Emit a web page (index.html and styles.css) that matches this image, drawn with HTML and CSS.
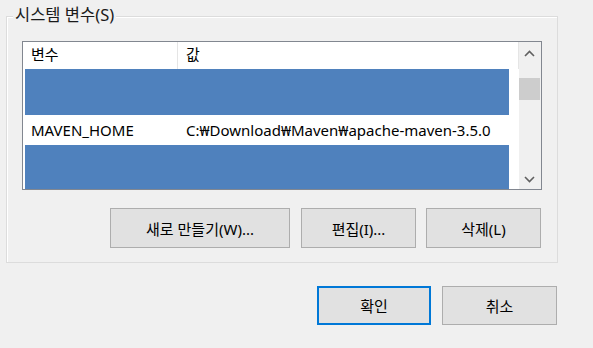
FILE: index.html
```html
<!DOCTYPE html>
<html lang="ko">
<head>
  <meta charset="UTF-8" />
  <title>시스템 변수</title>
  <link rel="stylesheet" href="styles.css">
</head>
<body>
  <div class="dialog">
    <div class="group">
      <span class="group-title">시스템 변수(S)</span>

      <div class="listview">
        <div class="list-main">
          <div class="list-header">
            <div class="col col-name">변수</div>
            <div class="col col-value">값</div>
          </div>
          <div class="row masked tall"></div>
          <div class="row">
            <div class="cell cell-name">MAVEN_HOME</div>
            <div class="cell cell-value">C:₩Download₩Maven₩apache-maven-3.5.0</div>
          </div>
          <div class="row masked fill"></div>
        </div>
        <div class="scrollbar">
          <div class="arrow">
            <svg width="11" height="7" viewBox="0 0 11 7"><path d="M1 6 L5.5 1.5 L10 6" fill="none" stroke="#606060" stroke-width="1.6"/></svg>
          </div>
          <div class="thumb"></div>
          <div class="track"></div>
          <div class="arrow">
            <svg width="11" height="7" viewBox="0 0 11 7"><path d="M1 1 L5.5 5.5 L10 1" fill="none" stroke="#606060" stroke-width="1.6"/></svg>
          </div>
        </div>
      </div>

      <div class="group-buttons">
        <button type="button" class="btn btn-wide">새로 만들기(W)...</button>
        <button type="button" class="btn">편집(I)...</button>
        <button type="button" class="btn">삭제(L)</button>
      </div>
    </div>

    <div class="dialog-buttons">
      <button type="button" class="btn btn-default">확인</button>
      <button type="button" class="btn">취소</button>
    </div>
  </div>
</body>
</html>
```

FILE: styles.css
```css
:root {
  --face: #f0f0f0;
  --edge: #dcdcdc;
  --list-border: #828790;
  --select: #4f81bd;
  --btn-face: #e1e1e1;
  --btn-border: #adadad;
  --accent: #0078d7;
  --text: #000000;
}

* {
  box-sizing: border-box;
  margin: 0;
  padding: 0;
}

html, body {
  background: var(--face);
  color: var(--text);
  font-family: 'Noto Sans', 'Noto Sans CJK KR', sans-serif;
  font-size: 15px;
  overflow: hidden;
}

.dialog {
  width: 593px;
  height: 348px;
  padding: 16px 0 0 6px;
}

.group {
  position: relative;
  width: 552px;
  height: 247px;
  border: 1px solid var(--edge);
  box-shadow: inset 1px 1px 0 #ffffff;
  padding: 24px 15px 0 15px;
}

.group-title {
  position: absolute;
  top: -13px;
  left: 6px;
  padding: 0 2px;
  background: var(--face);
  font-size: 16.5px;
  line-height: 22px;
  color: #1a1a1a;
}

.listview {
  display: flex;
  width: 520px;
  height: 149px;
  border: 1px solid var(--list-border);
  background: #ffffff;
}

.list-main {
  display: flex;
  flex-direction: column;
  width: 496px;
}

.list-header {
  display: flex;
  height: 27px;
  border-right: 1px solid #e5e5e5;
}

.col {
  line-height: 24px;
  padding-left: 8px;
}

.col-name {
  width: 155px;
  border-right: 1px solid #e5e5e5;
}

.row {
  display: flex;
  margin-left: 2px;
  width: 484px;
  height: 30px;
  align-items: center;
}

.row.masked {
  background: var(--select);
}

.row.tall {
  height: 46px;
}

.row.fill {
  flex: 1;
}

.cell-name {
  width: 161px;
  padding-left: 6px;
}

.cell-value {
  white-space: nowrap;
}

.scrollbar {
  display: flex;
  flex-direction: column;
  width: 22px;
  padding-right: 1px;
  background: var(--face);
}

.arrow {
  display: flex;
  align-items: center;
  justify-content: center;
  height: 21px;
  padding-top: 2px;
}

.thumb {
  height: 22px;
  margin-top: 15px;
  background: #cdcdcd;
}

.track {
  flex: 1;
}

.group-buttons {
  display: flex;
  justify-content: flex-end;
  gap: 10px;
  margin-top: 18px;
  padding-right: 1px;
}

.btn {
  font-family: inherit;
  font-size: 15px;
  color: var(--text);
  background: var(--btn-face);
  border: 1px solid var(--btn-border);
  width: 115px;
  height: 40px;
}

.btn-wide {
  width: 180px;
  margin-right: 1px;
}

.dialog-buttons {
  display: flex;
  justify-content: flex-end;
  gap: 11px;
  width: 551px;
  margin-top: 23px;
}

.dialog-buttons .btn {
  height: 39px;
}

.btn-default {
  width: 114px;
  border: 2px solid var(--accent);
}
```
